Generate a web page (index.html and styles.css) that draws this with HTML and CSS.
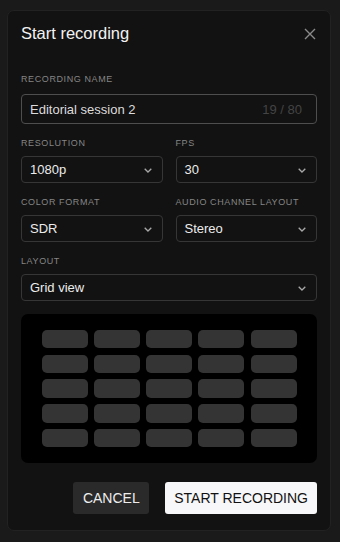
FILE: index.html
```html
<!DOCTYPE html>
<html lang="en">
<head>
    <meta charset="UTF-8">
    <meta name="viewport" content="width=device-width, initial-scale=1.0">
    <title>Start recording</title>
    <link rel="stylesheet" href="styles.css">
</head>
<body>
    <div class="dialog">
        <div class="dialog-header">
            <h1>Start recording</h1>
            <button class="close" aria-label="Close">
                <svg width="12" height="12" viewBox="0 0 12 12"><path d="M1 1L11 11M11 1L1 11" stroke="#8a8a8a" stroke-width="1.4" fill="none"/></svg>
            </button>
        </div>

        <div class="field first">
            <div class="label">Recording name</div>
            <div class="text-input">
                <span>Editorial session 2</span>
                <span class="counter">19 / 80</span>
            </div>
        </div>

        <div class="row">
            <div class="field">
                <div class="label">Resolution</div>
                <div class="select"><span>1080p</span><svg class="chev" width="8" height="5" viewBox="0 0 8 5"><path d="M0.7 0.7L4 4L7.3 0.7" stroke="#a8a8a8" stroke-width="1.3" fill="none"/></svg></div>
            </div>
            <div class="field">
                <div class="label">FPS</div>
                <div class="select"><span>30</span><svg class="chev" width="8" height="5" viewBox="0 0 8 5"><path d="M0.7 0.7L4 4L7.3 0.7" stroke="#a8a8a8" stroke-width="1.3" fill="none"/></svg></div>
            </div>
        </div>

        <div class="row">
            <div class="field">
                <div class="label">Color format</div>
                <div class="select"><span>SDR</span><svg class="chev" width="8" height="5" viewBox="0 0 8 5"><path d="M0.7 0.7L4 4L7.3 0.7" stroke="#a8a8a8" stroke-width="1.3" fill="none"/></svg></div>
            </div>
            <div class="field">
                <div class="label">Audio channel layout</div>
                <div class="select"><span>Stereo</span><svg class="chev" width="8" height="5" viewBox="0 0 8 5"><path d="M0.7 0.7L4 4L7.3 0.7" stroke="#a8a8a8" stroke-width="1.3" fill="none"/></svg></div>
            </div>
        </div>

        <div class="field">
            <div class="label">Layout</div>
            <div class="select"><span>Grid view</span><svg class="chev" width="8" height="5" viewBox="0 0 8 5"><path d="M0.7 0.7L4 4L7.3 0.7" stroke="#a8a8a8" stroke-width="1.3" fill="none"/></svg></div>
        </div>

        <div class="preview">
            <div class="grid">
                <div class="cell"></div><div class="cell"></div><div class="cell"></div><div class="cell"></div><div class="cell"></div>
                <div class="cell"></div><div class="cell"></div><div class="cell"></div><div class="cell"></div><div class="cell"></div>
                <div class="cell"></div><div class="cell"></div><div class="cell"></div><div class="cell"></div><div class="cell"></div>
                <div class="cell"></div><div class="cell"></div><div class="cell"></div><div class="cell"></div><div class="cell"></div>
                <div class="cell"></div><div class="cell"></div><div class="cell"></div><div class="cell"></div><div class="cell"></div>
            </div>
        </div>

        <div class="actions">
            <button class="btn btn-cancel">Cancel</button>
            <button class="btn btn-primary">Start recording</button>
        </div>
    </div>
</body>
</html>
```

FILE: styles.css
```css
body {
    font-family: "Liberation Sans", Arial, sans-serif;
    background-color: #1a1a1a;
    color: #eee;
    margin: 0;
    padding: 10px 0 0 7px;
}
.dialog {
    width: 296px;
    background-color: #121212;
    border: 1px solid #222;
    border-radius: 7px;
    padding: 10px 13px 16px;
}
.dialog-header {
    height: 24px;
    display: flex;
    align-items: center;
    justify-content: space-between;
}
.dialog-header h1 {
    margin: 0;
    font-size: 16.5px;
    line-height: 24px;
    font-weight: normal;
    color: #f2f2f2;
}
.close {
    background: none;
    border: none;
    padding: 0;
    width: 12px;
    height: 12px;
    margin-right: 1px;
    margin-top: 2px;
    display: flex;
}
.field {
    margin-top: 14px;
}
.field.first {
    margin-top: 28.5px;
}
.label {
    font-size: 9px;
    line-height: 11px;
    letter-spacing: 0.6px;
    text-transform: uppercase;
    color: #858585;
    margin-bottom: 7px;
}
.first .label {
    margin-bottom: 9.5px;
}
.row {
    display: grid;
    grid-template-columns: 1fr 1fr;
    gap: 13px;
}
.text-input {
    height: 28px;
    border: 1px solid #4e4e4e;
    border-radius: 4px;
    padding: 0 14px 0 8px;
    display: flex;
    align-items: center;
    justify-content: space-between;
    font-size: 13px;
    color: #dcdcdc;
}
.counter {
    color: #444;
}
.select {
    height: 25px;
    border: 1px solid #363636;
    border-radius: 4px;
    padding: 0 10px 0 8px;
    display: flex;
    align-items: center;
    justify-content: space-between;
    font-size: 13px;
    color: #ececec;
}
.chev {
    display: block;
    margin-top: 1px;
}
.preview {
    margin-top: 13px;
    height: 149px;
    background-color: #000;
    border-radius: 7px;
    display: flex;
    align-items: center;
    justify-content: center;
}
.grid {
    display: grid;
    grid-template-columns: repeat(5, 46px);
    grid-auto-rows: 18.5px;
    gap: 6.25px;
}
.cell {
    background-color: #343434;
    border-radius: 5px;
}
.actions {
    margin-top: 19px;
    display: flex;
    justify-content: flex-end;
    gap: 16px;
}
.btn {
    height: 32px;
    border: none;
    border-radius: 3px;
    padding: 0 9.5px;
    font-family: "Liberation Sans", Arial, sans-serif;
    font-size: 14px;
    text-transform: uppercase;
    cursor: pointer;
}
.btn-cancel {
    background-color: #2a2a2a;
    color: #eee;
}
.btn-primary {
    background-color: #f7f7f9;
    color: #111;
    padding: 0 9px;
}
```
